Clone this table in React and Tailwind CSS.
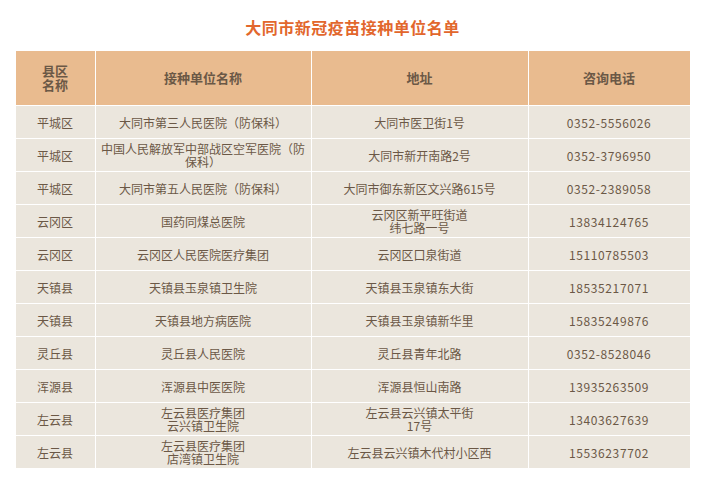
const rows = [
  ['平城区', ['大同市第三人民医院（防保科）'], ['大同市医卫街1号'], '0352-5556026'],
  ['平城区', ['中国人民解放军中部战区空军医院（防', '保科）'], ['大同市新开南路2号'], '0352-3796950'],
  ['平城区', ['大同市第五人民医院（防保科）'], ['大同市御东新区文兴路615号'], '0352-2389058'],
  ['云冈区', ['国药同煤总医院'], ['云冈区新平旺街道', '纬七路一号'], '13834124765'],
  ['云冈区', ['云冈区人民医院医疗集团'], ['云冈区口泉街道'], '15110785503'],
  ['天镇县', ['天镇县玉泉镇卫生院'], ['天镇县玉泉镇东大街'], '18535217071'],
  ['天镇县', ['天镇县地方病医院'], ['天镇县玉泉镇新华里'], '15835249876'],
  ['灵丘县', ['灵丘县人民医院'], ['灵丘县青年北路'], '0352-8528046'],
  ['浑源县', ['浑源县中医医院'], ['浑源县恒山南路'], '13935263509'],
  ['左云县', ['左云县医疗集团', '云兴镇卫生院'], ['左云县云兴镇太平街', '17号'], '13403627639'],
  ['左云县', ['左云县医疗集团', '店湾镇卫生院'], ['左云县云兴镇木代村小区西'], '15536237702'],
]

function Lines({ items }) {
  return items.map((t, i) => (
    <div key={i}>{t}</div>
  ))
}

export default function App() {
  return (
    <div className="bg-white w-[705px] h-[477px] pt-[16px] font-['Microsoft_YaHei','Noto_Sans_CJK_SC',sans-serif]">
      <h1 className="text-center text-[16px] font-bold leading-[22px] text-[#e2672d] tracking-[0.5px]">
        大同市新冠疫苗接种单位名单
      </h1>
      <table className="mx-auto mt-[12px] w-[675px] border-collapse table-fixed text-[#6b5846]">
        <colgroup>
          <col className="w-[80px]" />
          <col className="w-[216px]" />
          <col className="w-[217px]" />
          <col className="w-[162px]" />
        </colgroup>
        <thead>
          <tr className="h-[55px] bg-[#e9bb8f] text-[13px] font-bold leading-[14px]">
            <th className="border border-white text-center">
              <div>县区</div>
              <div>名称</div>
            </th>
            <th className="border border-white text-center">接种单位名称</th>
            <th className="border border-white text-center">地址</th>
            <th className="border border-white text-center">咨询电话</th>
          </tr>
        </thead>
        <tbody>
          {rows.map((r, i) => (
            <tr key={i} className="h-[33px] bg-[#ebe6dd] text-[12px] leading-[13px]">
              <td className="border border-white text-center">{r[0]}</td>
              <td className="border border-white text-center px-[2px]">
                <Lines items={r[1]} />
              </td>
              <td className="border border-white text-center">
                <Lines items={r[2]} />
              </td>
              <td className="border border-white text-center tracking-[0.6px]">{r[3]}</td>
            </tr>
          ))}
        </tbody>
      </table>
    </div>
  )
}
